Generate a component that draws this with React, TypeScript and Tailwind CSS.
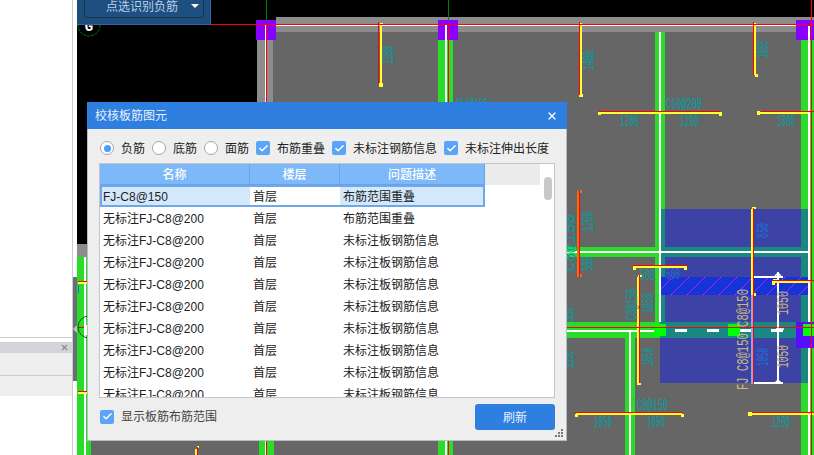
import { Check, X } from "lucide-react";

const rows = [
  { name: "FJ-C8@150", floor: "首层", issue: "布筋范围重叠" },
  { name: "无标注FJ-C8@200", floor: "首层", issue: "布筋范围重叠" },
  ...Array.from({ length: 8 }, () => ({
    name: "无标注FJ-C8@200",
    floor: "首层",
    issue: "未标注板钢筋信息",
  })),
];

const TEAL = "#00a0a0";
const BLUE = "#1a70d8";
const TAN = "#c8b880";
const GREEN = "#2adc2a";
const YELLOW = "#ffff33";
const RED = "#ff0000";

// x, y, w, h, fill
const floorRects: [number, number, number, number, string][] = [
  [77, 0, 737, 455, "#000000"],
  [273, 32, 541, 423, "#666666"],
  [276, 17, 538, 15, "#8c8c8c"],
  [257, 32, 16, 220, "#8c8c8c"],
  [77, 244, 10, 13, "#8c8c8c"],
  [77, 257, 196, 198, "#666666"],
  [77, 257, 14, 198, GREEN],
  [259, 252, 15, 203, GREEN],
  [438, 40, 15, 415, GREEN],
  [655, 32, 10, 290, GREEN],
  [801, 40, 13, 415, GREEN],
  [567, 247, 234, 10, GREEN],
  [453, 322, 348, 16, GREEN],
  [625, 338, 10, 117, GREEN],
];

const whiteRects: [number, number, number, number][] = [
  [276, 25, 532, 1],
  [265, 25, 1, 430],
  [84, 257, 2, 198],
  [445, 25, 2, 430],
  [659, 32, 2, 290],
  [808, 26, 2, 429],
  [567, 251, 241, 2],
  [567, 330, 93, 1.5],
  [629, 330, 2, 125],
  [675, 329, 12, 3],
  [707, 329, 12, 3],
  [740, 329, 14, 3],
  [771, 329, 12, 3],
  // white dimension on the right
  [777, 272, 2, 111],
  [754, 276, 29, 2],
  [754, 382, 29, 2],
];

const reds: [number, number, number, number][] = [
  [211, 24, 603, 1],
  [266, 25, 1, 430],
  [448, 25, 1, 430],
  [811, 0, 1, 455],
  [378, 22, 1, 62],
  [579, 22, 1, 73],
  [753, 22, 1, 53],
  [599, 111, 121, 1],
  [761, 111, 53, 1],
  [579, 191, 1, 86],
  [633, 265, 54, 1],
  [639, 275, 1, 108],
  [753, 208, 1, 175],
  [772, 280, 42, 1],
  [567, 327, 247, 1],
  [575, 412, 107, 1],
  [752, 412, 62, 1],
  [197, 447, 1, 8],
  [78, 281, 9, 1],
  [78, 391, 9, 1],
  [78, 327, 7, 1],
];

const yellows: [number, number, number, number][] = [
  [380, 23, 2, 62],
  [380, 23, 3, 1],
  [379, 83, 4, 4],
  [580, 23, 2, 72],
  [579, 94, 4, 3],
  [754, 23, 2, 52],
  [755, 74, 3, 3],
  [598, 112, 124, 2],
  [598, 112, 3, 3],
  [719, 112, 3, 4],
  [757, 112, 51, 2],
  [757, 111, 3, 4],
  [633, 266, 54, 2],
  [633, 266, 3, 4],
  [684, 266, 3, 4],
  [637, 277, 2, 107],
  [638, 275, 4, 2],
  [637, 383, 4, 2],
  [751, 209, 2, 86],
  [752, 207, 4, 2],
  [754, 293, 2, 3],
  [773, 281, 35, 2],
  [772, 281, 3, 4],
  [773, 279, 4, 2],
  [576, 413, 106, 2],
  [575, 414, 3, 3],
  [681, 414, 3, 3],
  [752, 413, 62, 2],
  [748, 412, 4, 4],
  [195, 449, 2, 6],
  [197, 446, 2, 2],
  [78, 282, 9, 2],
  [78, 392, 9, 2],
];

// horizontal drawing labels: text, x, baseline, width, colour
const labels: [string, number, number, number, string][] = [
  ["C10@200", 666, 109, 36, TEAL],
  ["1200", 620, 126, 19, TEAL],
  ["1200", 680, 126, 19, TEAL],
  ["1000", 777, 126, 18, TEAL],
  ["C10@150", 456, 109, 32, TEAL],
  ["C8@150", 637, 410, 31, TEAL],
  ["1050", 594, 427, 18, TEAL],
  ["1050", 647, 427, 18, TEAL],
  ["1200", 772, 427, 18, TEAL],
  ["500", 640, 280, 15, TEAL],
  ["500", 666, 279, 14, BLUE],
];

// rotated labels read bottom to top: text, baseline x, bottom y, length, colour
const sideLabels: [string, number, number, number, string][] = [
  ["1200", 393, 64, 18, TEAL],
  ["1400", 594, 70, 19, TEAL],
  ["1000", 768, 58, 17, TEAL],
  ["C8@150", 575, 272, 58, TEAL],
  ["1200", 593, 231, 19, TEAL],
  ["500", 593, 271, 14, TEAL],
  ["1050", 574, 323, 15, TEAL],
  ["1050", 574, 368, 17, TEAL],
  ["C8@150", 637, 320, 31, TEAL],
  ["1050", 653, 313, 19, TEAL],
  ["1050", 653, 366, 18, TEAL],
  ["850", 768, 238, 15, BLUE],
  ["1050", 768, 366, 18, BLUE],
  ["FJ C8@150 C8@150", 748, 390, 101, TAN],
  ["1050", 788, 315, 24, TAN],
  ["1050", 788, 368, 23, TAN],
];

function Rects({
  items,
  fill,
}: {
  items: [number, number, number, number][];
  fill: string;
}) {
  return (
    <>
      {items.map(([x, y, w, h], i) => (
        <rect key={i} x={x} y={y} width={w} height={h} fill={fill} />
      ))}
    </>
  );
}

function Drawing() {
  return (
    <svg
      viewBox="77 0 737 455"
      className="block h-full w-full"
      fontFamily="'Liberation Mono', monospace"
      fontSize="16"
    >
      <g shapeRendering="crispEdges">
        {floorRects.map(([x, y, w, h, fill], i) => (
          <rect key={i} x={x} y={y} width={w} height={h} fill={fill} />
        ))}
        {/* plan area overlay, tints the beams teal */}
        <rect x="660" y="209" width="148" height="174" fill="#0012ff" opacity="0.41" />
        <rect x="661" y="277" width="147" height="18" fill="#1633d6" />
      </g>
      <clipPath id="hatch">
        <rect x="661" y="277" width="147" height="18" />
      </clipPath>
      <g clipPath="url(#hatch)" stroke="#ff22ff" strokeWidth="1" strokeDasharray="2 1">
        {Array.from({ length: 11 }, (_, i) => (
          <line key={i} x1={655 + i * 16} y1={295} x2={673 + i * 16} y2={277} />
        ))}
      </g>
      <g shapeRendering="crispEdges">
        <Rects items={whiteRects} fill="#ffffff" />
        <rect x="751" y="295" width="2" height="89" fill="#86a8f0" />
        <rect x="796" y="322" width="18" height="26" fill="#5a0cff" />
        <rect x="654" y="324" width="12" height="12" fill="#00ff00" />
        <rect x="728" y="324" width="12" height="12" fill="#00ff00" />
        <rect x="803" y="324" width="11" height="12" fill="#00ff00" />
        <rect x="256" y="20" width="20" height="20" fill="#8800ff" />
        <rect x="438" y="20" width="20" height="20" fill="#8800ff" />
        <rect x="796" y="20" width="18" height="20" fill="#8800ff" />
        <rect x="265" y="25" width="1" height="15" fill="#ffffff" />
        <rect x="445" y="25" width="2" height="15" fill="#ffffff" />
        <rect x="808" y="26" width="2" height="14" fill="#ffffff" />
        <rect x="266" y="0" width="1" height="20" fill="#008000" />
        <rect x="448" y="0" width="1" height="20" fill="#008000" />
        <rect x="811" y="0" width="1" height="20" fill="#008000" />
        <Rects items={yellows} fill={YELLOW} />
        <rect x="577" y="191" width="2" height="86" fill="#f07010" />
        <rect x="580" y="190" width="2" height="3" fill="#f07010" />
        <rect x="580" y="274" width="2" height="3" fill="#f07010" />
        <Rects items={reds} fill={RED} />
      </g>
      <path
        d="M775 276l3-3 3 3M775 331l3-3 3 3M775 383l3-3 3 3M776 329h8"
        fill="none"
        stroke="#ffffff"
        strokeWidth="1.5"
      />
      <circle cx="89" cy="25" r="11" fill="none" stroke="#008000" strokeDasharray="3 1" />
      <text x="89" y="31" textAnchor="middle" fill="#ffffff" fontSize="14" fontWeight="700">
        G
      </text>
      <circle cx="89" cy="327" r="11" fill="none" stroke="#006400" />
      <rect x="84" y="325" width="3" height="10" fill="#ffffff" />
      <rect x="78" y="285" width="1" height="8" fill="#1a70d8" />

      {labels.map(([t, x, y, w, c], i) => (
        <text key={i} x={x} y={y} fill={c} textLength={w} lengthAdjust="spacingAndGlyphs">
          {t}
        </text>
      ))}
      {sideLabels.map(([t, x, y, w, c], i) => (
        <text
          key={i}
          transform={`translate(${x} ${y}) rotate(-90)`}
          fill={c}
          textLength={w}
          lengthAdjust="spacingAndGlyphs"
        >
          {t}
        </text>
      ))}
    </svg>
  );
}

function Radio({ label, checked }: { label: string; checked?: boolean }) {
  return (
    <div className="flex w-[52px] items-center gap-[7px]">
      <span className="flex h-[14px] w-[14px] shrink-0 items-center justify-center rounded-full border border-[#a8a8a8] bg-white">
        {checked && <span className="h-[7px] w-[7px] rounded-full bg-[#4a9dff]" />}
      </span>
      <span className="pt-px">{label}</span>
    </div>
  );
}

function CheckBox({ label, className }: { label: string; className?: string }) {
  return (
    <div className={`flex items-center gap-[7px] ${className ?? ""}`}>
      <span className="flex h-[14px] w-[14px] shrink-0 items-center justify-center rounded-[2px] bg-[#5aa5f8]">
        <Check size={11} strokeWidth={3} className="text-white" />
      </span>
      <span className="pt-px">{label}</span>
    </div>
  );
}

function Grip() {
  return (
    <svg width="8" height="8" viewBox="0 0 8 8" className="absolute bottom-[3px] right-[3px]">
      <path d="M6 0h2v2H6zM3 3h2v2H3zM6 3h2v2H6zM0 6h2v2H0zM3 6h2v2H3zM6 6h2v2H6z" fill="#777777" />
    </svg>
  );
}

function CheckDialog() {
  return (
    <div className="absolute left-[87px] top-[102px] flex h-[339px] w-[480px] flex-col border-x border-b border-[#b8bcc8] bg-[#eeeeee] text-[12px] leading-none text-[#222222]">
      <div className="-mx-px flex h-[27px] shrink-0 items-center justify-between bg-[#2e7fe0] pl-[8px] pr-[9px] text-[#e8f2ff]">
        <span>校核板筋图元</span>
        <X size={12} strokeWidth={2.5} className="text-white" />
      </div>

      <div className="flex h-[34px] shrink-0 items-center pl-[12px] pt-[4px]">
        <Radio label="负筋" checked />
        <Radio label="底筋" />
        <Radio label="面筋" />
        <CheckBox label="布筋重叠" className="w-[76px]" />
        <CheckBox label="未标注钢筋信息" className="w-[112px]" />
        <CheckBox label="未标注伸出长度" />
      </div>

      <div className="mx-[11px] flex h-[235px] shrink-0 overflow-hidden border border-[#c4c6cc] bg-white">
        <div className="flex-1 overflow-hidden">
          <div className="grid h-[21px] grid-cols-[150px_90px_145px_1fr] bg-[#ececec] font-medium text-white">
            <div className="flex items-center justify-center border-r border-b border-[#62a4ee] bg-[#7db8f8] pt-px">名称</div>
            <div className="flex items-center justify-center border-r border-b border-[#62a4ee] bg-[#7db8f8] pt-px">楼层</div>
            <div className="flex items-center justify-center border-r border-b border-[#62a4ee] bg-[#7db8f8] pt-px">问题描述</div>
          </div>
          {rows.map((row, i) => (
            <div key={i} className="grid h-[22px] w-[385px] grid-cols-[150px_90px_145px] items-center">
              {i === 0 ? (
                <>
                  <div className="flex h-full items-center border-y-2 border-l-2 border-[#6ea8e8] bg-[#d4e8fc] pl-[1px] pt-px">{row.name}</div>
                  <div className="flex h-full items-center border-y-2 border-[#6ea8e8] bg-white pl-[3px] pt-px">{row.floor}</div>
                  <div className="flex h-full items-center border-y-2 border-r-2 border-[#6ea8e8] bg-[#d4e8fc] pl-[3px] pt-px">{row.issue}</div>
                </>
              ) : (
                <>
                  <div className="pl-[3px] pt-[2px]">{row.name}</div>
                  <div className="pl-[3px] pt-[2px]">{row.floor}</div>
                  <div className="pl-[3px] pt-[2px]">{row.issue}</div>
                </>
              )}
            </div>
          ))}
        </div>
        <div className="w-[14px] shrink-0 bg-white pl-[4px] pt-[13px]">
          <div className="h-[23px] w-[8px] rounded-[4px] bg-[#c8c8c8]" />
        </div>
      </div>

      <div className="flex flex-1 items-center justify-between pb-[4px] pl-[12px] pr-[11px]">
        <CheckBox label="显示板筋布筋范围" className="-mt-px text-[#444444]" />
        <button className="flex h-[26px] w-[80px] items-center justify-center rounded-[3px] bg-[#2e7fe0] pt-px text-[#e8f2ff]">
          刷新
        </button>
      </div>
      <Grip />
    </div>
  );
}

export default function App() {
  return (
    <div className="relative flex h-[455px] w-[814px] overflow-hidden bg-white font-['Liberation_Sans','Noto_Sans_CJK_SC',sans-serif]">
      {/* side panel peeking out on the left */}
      <div className="flex w-[73px] shrink-0 flex-col border-r border-[#cccccc] pt-[337px]">
        <div className="h-[5px] border-t border-[#cccccc]" />
        <div className="flex h-[11px] items-center justify-end bg-[#d2d4da] pr-[3px]">
          <X size={9} strokeWidth={3} className="text-[#888888]" />
        </div>
        <div className="h-[23px] border-b border-[#cccccc] bg-[#eeeeee]" />
        <div className="h-[20px] bg-[#eeeeee]" />
      </div>

      <div className="flex w-[4px] shrink-0 flex-col pt-[277px]">
        <div className="flex h-[104px] items-center bg-[#6a6e78]">
          <span className="h-0 w-0 border-y-[4px] border-r-[4px] border-y-transparent border-r-[#c0c0c0]" />
        </div>
      </div>

      <div className="flex-1">
        <Drawing />
      </div>

      <div className="absolute left-[77px] top-0 flex h-[25px] w-[134px] border-b border-r border-[#2a68a8] bg-[#1e4d7b] pl-[7px]">
        <div className="flex h-[18px] w-[120px] items-center rounded-b-[3px] border-x border-b border-[#16355a] bg-[#1f4f80] pl-[21px] text-[12px] text-[#b8d0e8]">
          <span className="-mt-[4px]">点选识别负筋</span>
          <span className="ml-[13px] -mt-[5px] h-0 w-0 border-x-[4px] border-t-[4px] border-x-transparent border-t-white" />
        </div>
      </div>

      <CheckDialog />
    </div>
  );
}
